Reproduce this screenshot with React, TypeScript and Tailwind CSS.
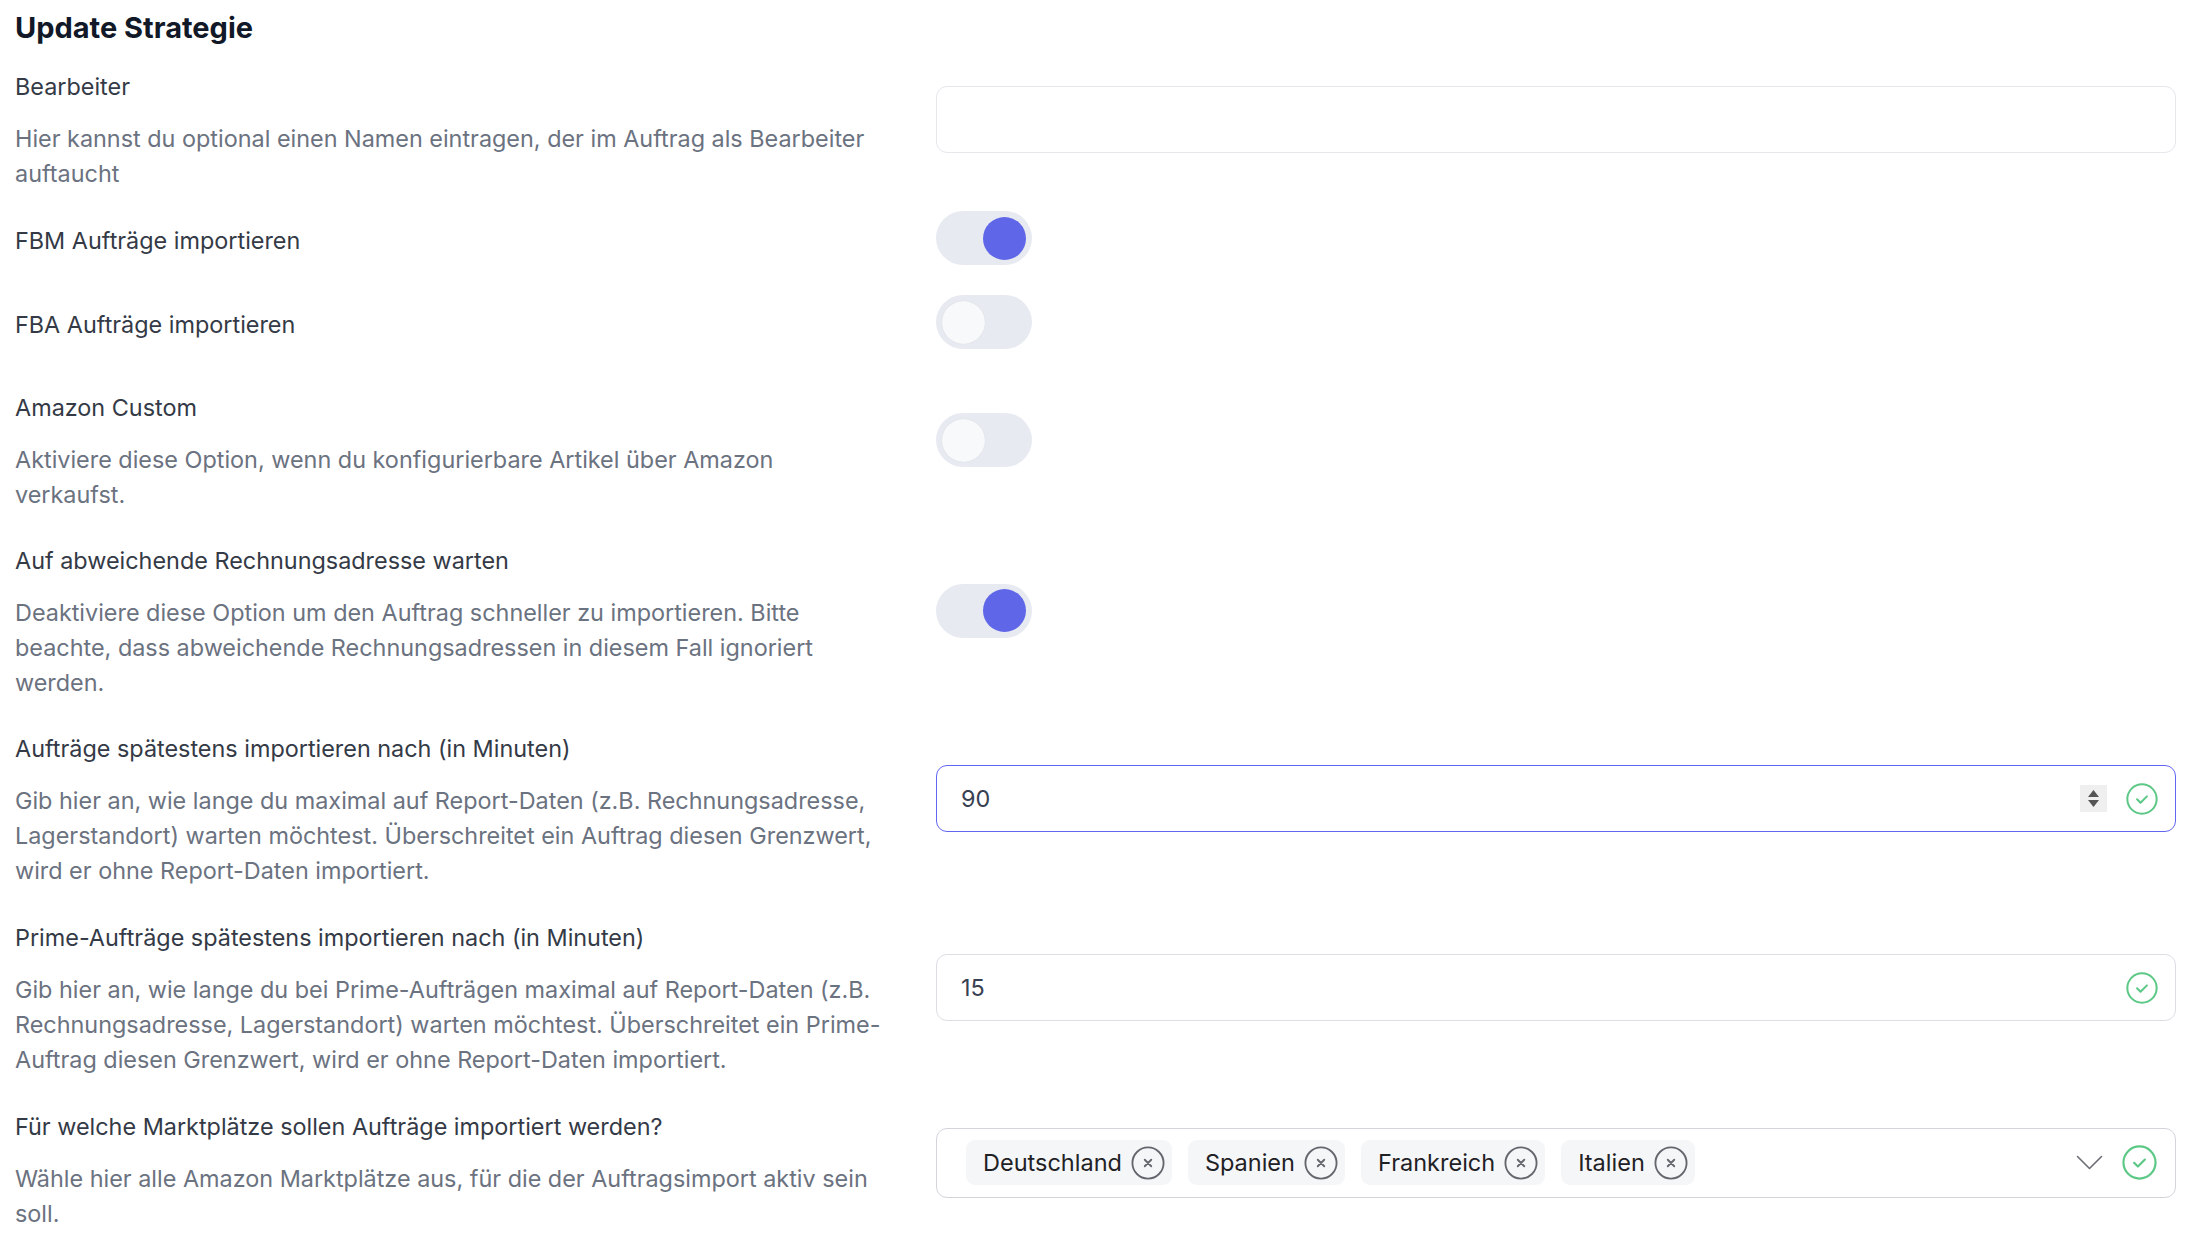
import React, { useState } from 'react';

const CheckCircle = ({ size }: { size: number }) => (
  <svg width={size} height={size} viewBox="0 0 24 24" fill="none" stroke="#5cc886" strokeWidth={1.5} strokeLinecap="round" strokeLinejoin="round">
    <circle cx="12" cy="12" r="11" />
    <path d="m8.3 12.2 2.6 2.6 4.8-4.8" />
  </svg>
);

const XCircle = () => (
  <svg width={34} height={34} viewBox="0 0 24 24" fill="none" stroke="#63666d" strokeWidth={1.3} strokeLinecap="round">
    <circle cx="12" cy="12" r="11" />
    <path d="m14.3 9.7-4.6 4.6M9.7 9.7l4.6 4.6" />
  </svg>
);

const Toggle = ({ on, className = '' }: { on: boolean; className?: string }) => {
  const [checked, setChecked] = useState(on);
  return (
    <button
      type="button"
      onClick={() => setChecked(!checked)}
      className={`flex h-[54px] w-[96px] items-center rounded-full bg-[#e8eaf1] px-[6px] ${className}`}
    >
      {checked ? (
        <span className="ml-auto h-[43px] w-[43px] rounded-full bg-[#5f67e8]" />
      ) : (
        <span className="h-[43px] w-[43px] rounded-full bg-[#f8f9fb] shadow-[0_0_1px_rgba(0,0,0,0.12)]" />
      )}
    </button>
  );
};

const Label = ({ children, className = '' }: { children: React.ReactNode; className?: string }) => (
  <div className={`text-[23.4px] leading-[35px] text-[#343a46] ${className}`}>{children}</div>
);

const Desc = ({ lines }: { lines: string[] }) => (
  <p className="mt-[17px] text-[23.4px] leading-[35px] text-[#6b7280] whitespace-nowrap">
    {lines.map((l, i) => (
      <React.Fragment key={i}>
        {l}
        {i < lines.length - 1 && <br />}
      </React.Fragment>
    ))}
  </p>
);

const Row = ({ className, children }: { className: string; children: React.ReactNode }) => (
  <div className={`grid grid-cols-[889px_1fr] gap-x-[32px] items-center ${className}`}>{children}</div>
);

const markets = ['Deutschland', 'Spanien', 'Frankreich', 'Italien'];

export default function App() {
  const [name, setName] = useState('');
  const [minutes, setMinutes] = useState('90');
  const [prime, setPrime] = useState('15');
  const [selected, setSelected] = useState(markets);

  return (
    <div
      className="min-h-screen bg-white pl-[15px] pr-[19px] pt-[10px]"
      style={{ fontFamily: 'Inter, "Liberation Sans", sans-serif' }}
    >
      <h2 className="text-[29px] leading-[35px] font-bold text-[#111827]">Update Strategie</h2>

      {/* Bearbeiter */}
      <Row className="mt-[24px]">
        <div>
          <Label>Bearbeiter</Label>
          <Desc lines={['Hier kannst du optional einen Namen eintragen, der im Auftrag als Bearbeiter', 'auftaucht']} />
        </div>
        <input
          value={name}
          onChange={(e) => setName(e.target.value)}
          className="mb-[22px] h-[67px] w-full rounded-[11px] border-[1.5px] border-[#e5e7eb] px-[24px] text-[23.4px] text-[#374151] outline-none"
        />
      </Row>

      {/* FBM */}
      <Row className="mt-[20px]">
        <Label className="pt-[5px]">FBM Aufträge importieren</Label>
        <Toggle on />
      </Row>

      {/* FBA */}
      <Row className="mt-[30px]">
        <Label className="pt-[5px]">FBA Aufträge importieren</Label>
        <Toggle on={false} />
      </Row>

      {/* Amazon Custom */}
      <Row className="mt-[41px]">
        <div>
          <Label>Amazon Custom</Label>
          <Desc lines={['Aktiviere diese Option, wenn du konfigurierbare Artikel über Amazon', 'verkaufst.']} />
        </div>
        <Toggle on={false} className="mb-[22px]" />
      </Row>

      {/* Rechnungsadresse */}
      <Row className="mt-[31px]">
        <div>
          <Label>Auf abweichende Rechnungsadresse warten</Label>
          <Desc
            lines={[
              'Deaktiviere diese Option um den Auftrag schneller zu importieren. Bitte',
              'beachte, dass abweichende Rechnungsadressen in diesem Fall ignoriert',
              'werden.',
            ]}
          />
        </div>
        <Toggle on className="mb-[22px]" />
      </Row>

      {/* Minuten */}
      <Row className="mt-[31px]">
        <div>
          <Label>Aufträge spätestens importieren nach (in Minuten)</Label>
          <Desc
            lines={[
              'Gib hier an, wie lange du maximal auf Report-Daten (z.B. Rechnungsadresse,',
              'Lagerstandort) warten möchtest. Überschreitet ein Auftrag diesen Grenzwert,',
              'wird er ohne Report-Daten importiert.',
            ]}
          />
        </div>
        <div className="mb-[22px] flex h-[67px] items-center rounded-[11px] border-[1.5px] border-[#6366f1] pl-[24px] pr-[17px]">
          <input
            value={minutes}
            onChange={(e) => setMinutes(e.target.value)}
            className="flex-1 bg-transparent text-[23.4px] text-[#374151] outline-none"
          />
          <div className="flex h-[27px] w-[27px] flex-col items-center justify-center gap-[3px] bg-[#efefef]">
            <svg width="11" height="7" viewBox="0 0 11 7"><path d="M5.5 0 11 7H0z" fill="#555" /></svg>
            <svg width="11" height="7" viewBox="0 0 11 7"><path d="M0 0h11L5.5 7z" fill="#555" /></svg>
          </div>
          <div className="ml-[19px] flex">
            <CheckCircle size={32} />
          </div>
        </div>
      </Row>

      {/* Prime */}
      <Row className="mt-[32px]">
        <div>
          <Label>Prime-Aufträge spätestens importieren nach (in Minuten)</Label>
          <Desc
            lines={[
              'Gib hier an, wie lange du bei Prime-Aufträgen maximal auf Report-Daten (z.B.',
              'Rechnungsadresse, Lagerstandort) warten möchtest. Überschreitet ein Prime-',
              'Auftrag diesen Grenzwert, wird er ohne Report-Daten importiert.',
            ]}
          />
        </div>
        <div className="mb-[22px] flex h-[67px] items-center rounded-[11px] border-[1.5px] border-[#dcdee3] pl-[24px] pr-[17px]">
          <input
            value={prime}
            onChange={(e) => setPrime(e.target.value)}
            className="flex-1 bg-transparent text-[23.4px] text-[#374151] outline-none"
          />
          <div className="flex">
            <CheckCircle size={32} />
          </div>
        </div>
      </Row>

      {/* Marktplätze */}
      <Row className="mt-[32px]">
        <div>
          <Label>Für welche Marktplätze sollen Aufträge importiert werden?</Label>
          <Desc lines={['Wähle hier alle Amazon Marktplätze aus, für die der Auftragsimport aktiv sein', 'soll.']} />
        </div>
        <div className="mb-[15px] flex h-[70px] items-center rounded-[11px] border-[1.5px] border-[#d4d5da] pl-[29px] pr-[18px]">
          <div className="flex flex-1 items-center gap-[16px]">
            {selected.map((m) => (
              <span key={m} className="flex h-[45px] items-center gap-[9px] rounded-[9px] bg-[#f5f6f8] pl-[17px] pr-[7px] text-[23.5px] text-[#1f2125]">
                {m}
                <button type="button" className="flex" onClick={() => setSelected(selected.filter((s) => s !== m))}>
                  <XCircle />
                </button>
              </span>
            ))}
          </div>
          <svg width="27" height="15" viewBox="0 0 27 15" fill="none" stroke="#6b6e75" strokeWidth={1.6} strokeLinecap="round" strokeLinejoin="round">
            <path d="M1.5 1.5 13.5 13.5 25.5 1.5" />
          </svg>
          <div className="ml-[19px] flex">
            <CheckCircle size={35} />
          </div>
        </div>
      </Row>
    </div>
  );
}
